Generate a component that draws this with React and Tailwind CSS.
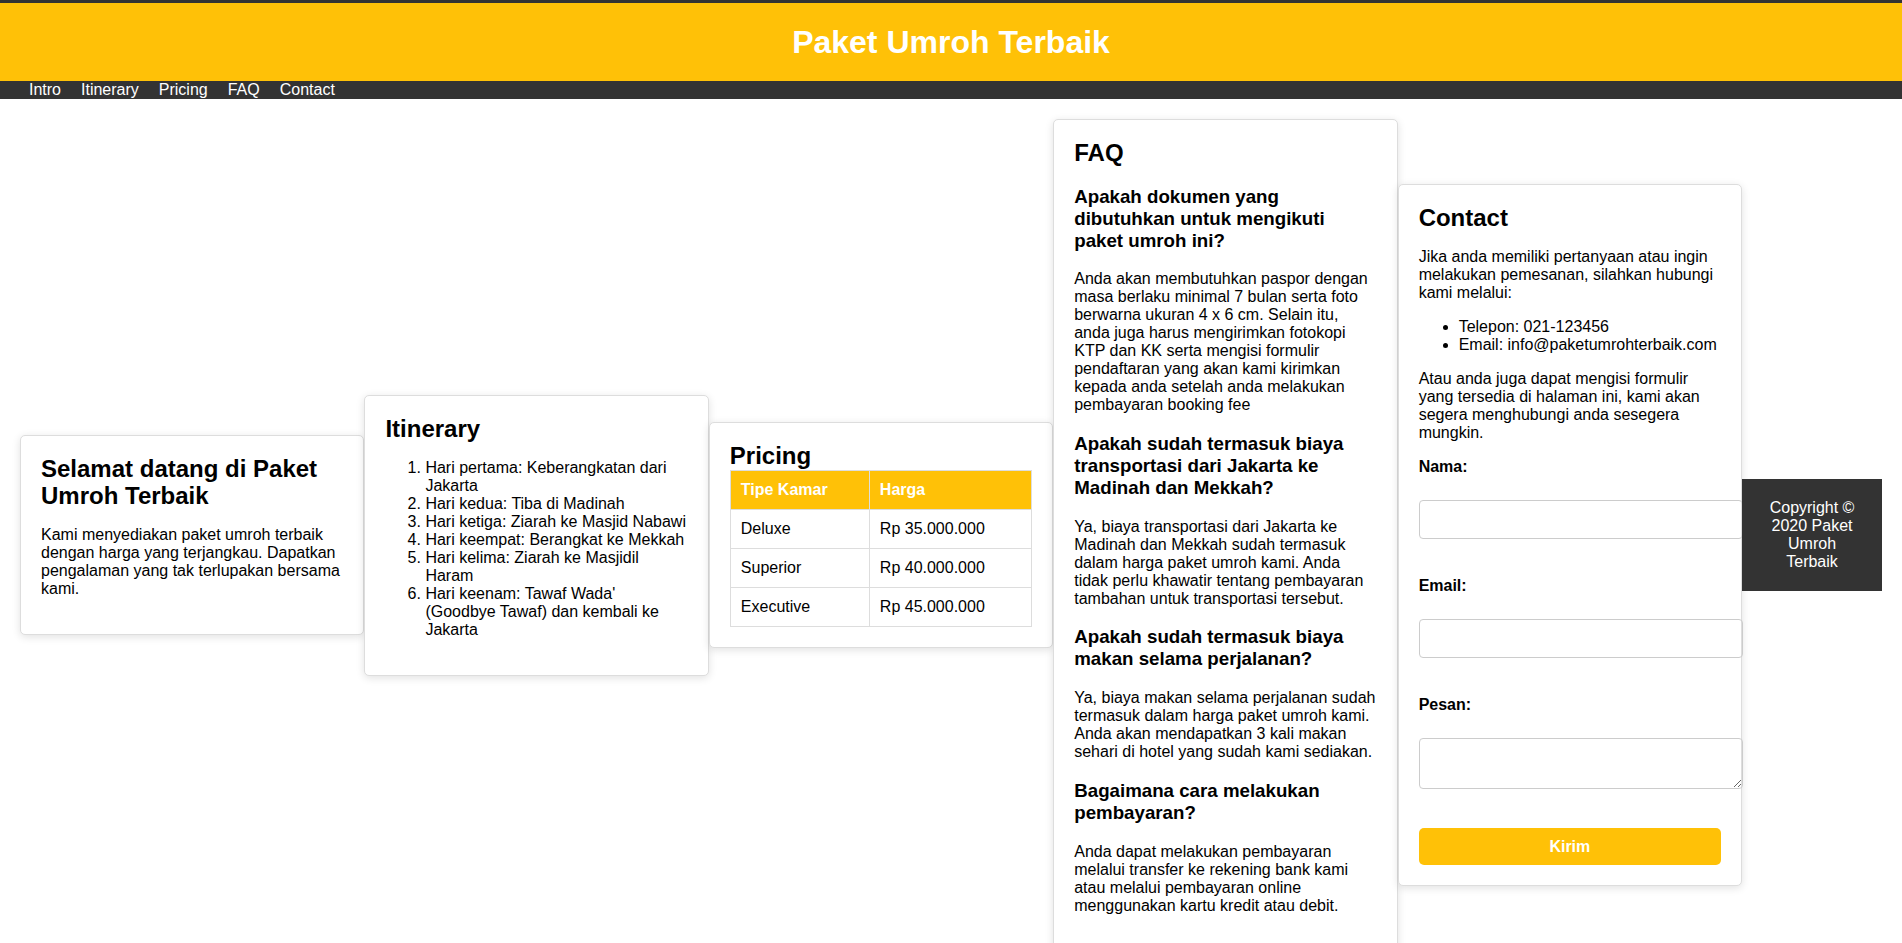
import React from "react";

const itinerary = [
  "Hari pertama: Keberangkatan dari Jakarta",
  "Hari kedua: Tiba di Madinah",
  "Hari ketiga: Ziarah ke Masjid Nabawi",
  "Hari keempat: Berangkat ke Mekkah",
  "Hari kelima: Ziarah ke Masjidil Haram",
  "Hari keenam: Tawaf Wada' (Goodbye Tawaf) dan kembali ke Jakarta",
];

const prices = [
  ["Deluxe", "Rp 35.000.000"],
  ["Superior", "Rp 40.000.000"],
  ["Executive", "Rp 45.000.000"],
];

const faqs = [
  {
    q: "Apakah dokumen yang dibutuhkan untuk mengikuti paket umroh ini?",
    a: "Anda akan membutuhkan paspor dengan masa berlaku minimal 7 bulan serta foto berwarna ukuran 4 x 6 cm. Selain itu, anda juga harus mengirimkan fotokopi KTP dan KK serta mengisi formulir pendaftaran yang akan kami kirimkan kepada anda setelah anda melakukan pembayaran booking fee",
  },
  {
    q: "Apakah sudah termasuk biaya transportasi dari Jakarta ke Madinah dan Mekkah?",
    a: "Ya, biaya transportasi dari Jakarta ke Madinah dan Mekkah sudah termasuk dalam harga paket umroh kami. Anda tidak perlu khawatir tentang pembayaran tambahan untuk transportasi tersebut.",
  },
  {
    q: "Apakah sudah termasuk biaya makan selama perjalanan?",
    a: "Ya, biaya makan selama perjalanan sudah termasuk dalam harga paket umroh kami. Anda akan mendapatkan 3 kali makan sehari di hotel yang sudah kami sediakan.",
  },
  {
    q: "Bagaimana cara melakukan pembayaran?",
    a: "Anda dapat melakukan pembayaran melalui transfer ke rekening bank kami atau melalui pembayaran online menggunakan kartu kredit atau debit.",
  },
];

const card =
  "flex-1 min-w-0 bg-white border border-[#ddd] rounded-[5px] p-5 shadow-[0_2px_8px_rgba(0,0,0,0.12)]";
const title = "text-[24px] font-bold leading-[26.8px]";

const Field = ({ label, area }) => (
  <>
    <label className="block font-bold leading-[18px] mb-6">{label}</label>
    {area ? (
      <textarea className="block box-content w-full h-[29px] p-[10px] border border-[#ccc] rounded-[4px] mb-[39px]" />
    ) : (
      <input
        type="text"
        className="block box-content w-full h-[17px] p-[10px] border border-[#ccc] rounded-[4px] mb-[38px]"
      />
    )}
  </>
);

export default function App() {
  return (
    <div className="font-['Liberation_Sans',Arial,sans-serif] text-[16px] leading-[18px] text-black bg-white">
      <header className="border-t-[3px] border-[#333] bg-[#FFC107] py-5 text-center">
        <h1 className="text-[32px] font-bold leading-[38px] text-white">Paket Umroh Terbaik</h1>
      </header>
      <nav className="bg-[#333] flex gap-5 pl-[29px] leading-[18px] text-white">
        <a href="#intro">Intro</a>
        <a href="#itinerary">Itinerary</a>
        <a href="#pricing">Pricing</a>
        <a href="#faq">FAQ</a>
        <a href="#contact">Contact</a>
      </nav>

      <main className="flex items-center p-5">
        <section id="intro" className={card}>
          <h2 className={title}>Selamat datang di Paket Umroh Terbaik</h2>
          <p className="my-4">
            Kami menyediakan paket umroh terbaik dengan harga yang terjangkau. Dapatkan pengalaman yang tak
            terlupakan bersama kami.
          </p>
        </section>

        <section id="itinerary" className={card}>
          <h2 className={title}>Itinerary</h2>
          <ol className="list-decimal pl-10 my-4">
            {itinerary.map((item) => (
              <li key={item}>{item}</li>
            ))}
          </ol>
        </section>

        <section id="pricing" className={card}>
          <h2 className={title}>Pricing</h2>
          <table className="w-full border-collapse">
            <thead>
              <tr className="bg-[#FFC107] text-white">
                <th className="border border-[#ddd] p-[10px] text-left font-bold">Tipe Kamar</th>
                <th className="border border-[#ddd] p-[10px] text-left font-bold">Harga</th>
              </tr>
            </thead>
            <tbody>
              {prices.map(([type, price]) => (
                <tr key={type}>
                  <td className="border border-[#ddd] p-[10px]">{type}</td>
                  <td className="border border-[#ddd] p-[10px]">{price}</td>
                </tr>
              ))}
            </tbody>
          </table>
        </section>

        <section id="faq" className={card}>
          <h2 className={title}>FAQ</h2>
          {faqs.map((f) => (
            <div key={f.q}>
              <h3 className="text-[18.72px] font-bold leading-[22px] my-[18.72px]">{f.q}</h3>
              <p className="my-4">{f.a}</p>
            </div>
          ))}
        </section>

        <section id="contact" className={card}>
          <h2 className={title}>Contact</h2>
          <p className="my-4">
            Jika anda memiliki pertanyaan atau ingin melakukan pemesanan, silahkan hubungi kami melalui:
          </p>
          <ul className="list-disc pl-10 my-4">
            <li>Telepon: 021-123456</li>
            <li>Email: info@paketumrohterbaik.com</li>
          </ul>
          <p className="my-4">
            Atau anda juga dapat mengisi formulir yang tersedia di halaman ini, kami akan segera menghubungi anda
            sesegera mungkin.
          </p>
          <form onSubmit={(e) => e.preventDefault()}>
            <Field label="Nama:" />
            <Field label="Email:" />
            <Field label="Pesan:" area />
            <button
              type="submit"
              className="block w-full h-[37px] bg-[#FFC107] text-white font-bold rounded-[5px]"
            >
              Kirim
            </button>
          </form>
        </section>

        <footer className="w-[140px] shrink-0 bg-[#333] text-white text-center p-5">
          Copyright © 2020 Paket Umroh Terbaik
        </footer>
      </main>
    </div>
  );
}
